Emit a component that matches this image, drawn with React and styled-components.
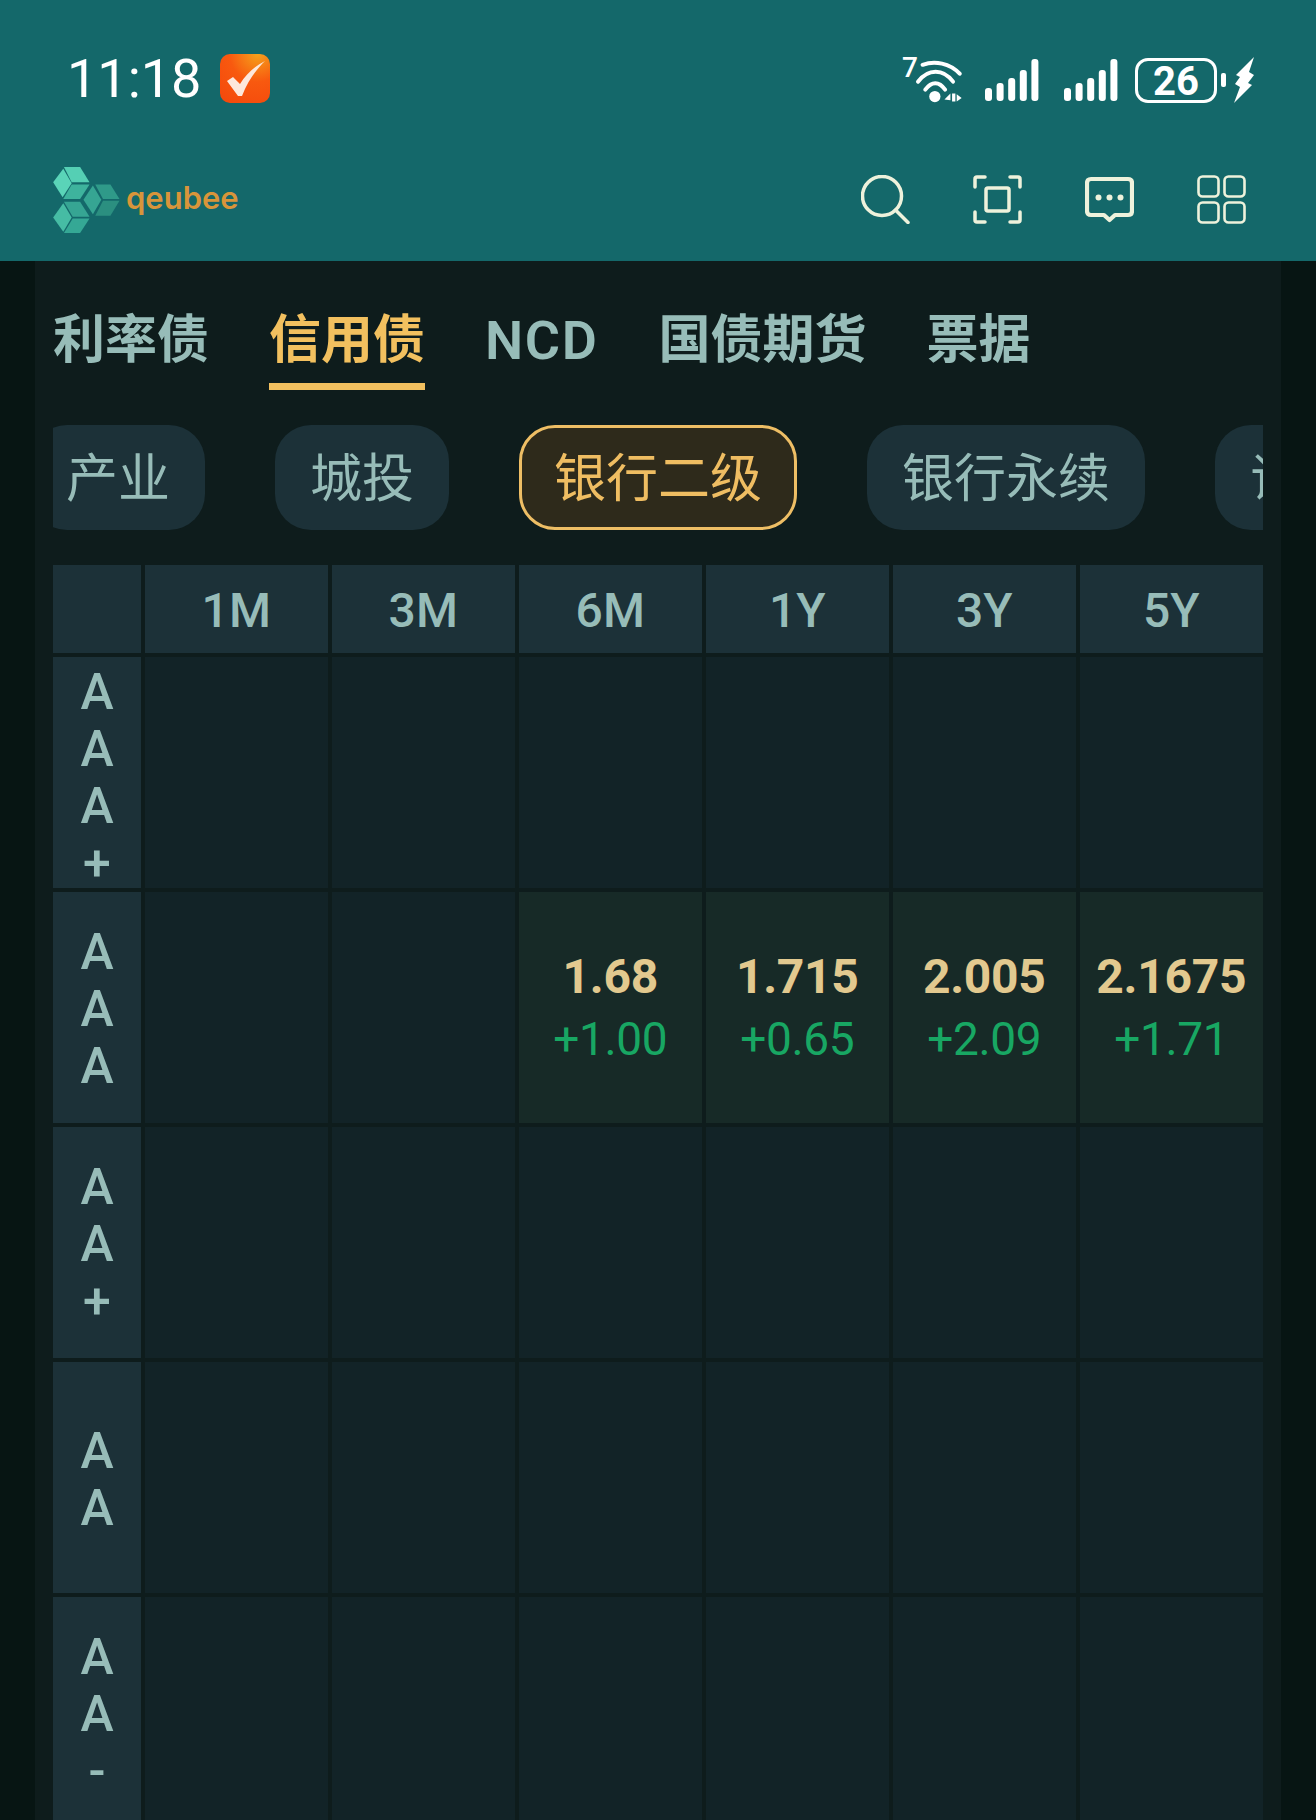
import React from "react";
import styled, { createGlobalStyle } from "styled-components";

const GlobalStyle = createGlobalStyle`
  html, body {
    margin: 0;
    padding: 0;
    background: #071513;
  }
  * {
    box-sizing: border-box;
  }
`;

const Page = styled.div`
  width: 1316px;
  height: 1820px;
  overflow: hidden;
  background: #071513;
  font-family: Roboto, "Noto Sans CJK SC", sans-serif;
`;

const Header = styled.header`
  height: 261px;
  background: #14686a;
  display: flex;
  flex-direction: column;
`;

const StatusBar = styled.div`
  height: 131px;
  padding: 54px 62px 0 67px;
  display: flex;
  justify-content: space-between;
  align-items: flex-start;
`;

const StatusLeft = styled.div`
  display: flex;
  align-items: center;
  gap: 19px;
`;

const Time = styled.span`
  color: #fff;
  font-size: 54px;
  line-height: 48px;
`;

const CheckBadge = styled.div`
  width: 50px;
  height: 49px;
  border-radius: 10px;
  background: radial-gradient(circle at 75% 0%, #f5a21c 0%, #f8590f 45%, #f4470c 100%);
  display: flex;
  align-items: center;
  justify-content: center;
`;

const StatusRight = styled.div`
  display: flex;
  align-items: center;
  height: 48px;
  margin-top: 2px;
`;

const WifiWrap = styled.div`
  display: flex;
  align-items: flex-start;
  margin-right: 23px;
`;

const WifiSup = styled.span`
  color: #fff;
  font-size: 28px;
  font-weight: 500;
  line-height: 20px;
  width: 13px;
`;

const SignalIcon = styled.svg`
  display: block;
  width: 54px;
  height: 42px;
  margin-right: ${(p) => p.$gap}px;
`;

const Battery = styled.div`
  width: 82px;
  height: 45px;
  border: 3px solid #fff;
  border-radius: 13px;
  color: #fff;
  font-size: 40px;
  font-weight: 700;
  line-height: 41px;
  text-align: center;
`;

const BatteryNub = styled.div`
  width: 5px;
  height: 14px;
  margin: 0 8px 0 4px;
  border-radius: 2px;
  background: #fff;
`;

const NavBar = styled.div`
  flex: 1;
  padding: 0 70px 0 53px;
  display: flex;
  justify-content: space-between;
  align-items: flex-start;
`;

const Logo = styled.div`
  display: flex;
  align-items: center;
  gap: 6px;
  margin-top: 36px;
`;

const LogoText = styled.span`
  padding-bottom: 5px;
  color: #d8953a;
  font-family: Inter, sans-serif;
  font-size: 31px;
  font-weight: 600;
  line-height: 40px;
`;

const NavIcons = styled.div`
  display: flex;
  gap: 63px;
  margin-top: 44px;
`;

const NavIcon = styled.svg`
  display: block;
  width: 49px;
  height: 49px;
  fill: none;
  stroke: #eef2dc;
  stroke-width: ${(p) => p.$stroke || 3.5};
  stroke-linecap: round;
  stroke-linejoin: round;
`;

const Main = styled.main`
  width: 1246px;
  margin: 0 35px;
  height: 1559px;
  padding: 50px 18px 0;
  background: #0e1c1c;
`;

const Tabs = styled.nav`
  display: flex;
  gap: 60px;
`;

const Tab = styled.div`
  height: 79px;
  padding-bottom: 12px;
  border-bottom: 7px solid ${(p) => (p.$active ? "#f2c05f" : "transparent")};
  color: ${(p) => (p.$active ? "#f2c05f" : "#97bcb8")};
  font-size: ${(p) => (p.$latin ? 54 : 52)}px;
  font-weight: ${(p) => (p.$latin ? 600 : 700)};
  letter-spacing: ${(p) => (p.$latin ? "1.6px" : "0")};
  line-height: 60px;
`;

const ChipClip = styled.div`
  margin-top: 35px;
  overflow: hidden;
`;

const ChipTrack = styled.div`
  display: flex;
  gap: 70px;
  margin-left: -22px;
  width: 1400px;
`;

const Chip = styled.div`
  flex: none;
  height: 105px;
  border-radius: 36px;
  border: ${(p) => (p.$active ? "3px solid #eebe65" : "none")};
  padding: ${(p) => (p.$active ? "0 32px" : "0 35px")};
  background: ${(p) => (p.$active ? "#2e2a1b" : "#1c3138")};
  color: ${(p) => (p.$active ? "#efbd62" : "#97bcb8")};
  font-size: 52px;
  line-height: ${(p) => (p.$active ? "103px" : "109px")};
`;

const Grid = styled.div`
  margin-top: 35px;
  display: grid;
  grid-template-columns: 88px repeat(6, 1fr);
  grid-template-rows: 88px;
  grid-auto-rows: 231px;
  column-gap: 3.5px;
  row-gap: 4px;
`;

const HeadCell = styled.div`
  background: #1c3138;
  color: #97bcb8;
  font-size: 48px;
  font-weight: 500;
  line-height: 92px;
  text-align: center;
`;

const RatingCell = styled.div`
  padding-top: ${(p) => (p.$tall ? 10 : 4)}px;
  background: #1c3138;
  display: flex;
  align-items: center;
  justify-content: center;
`;

const RatingText = styled.div`
  width: 40px;
  color: #97bcb8;
  font-size: 50px;
  font-weight: 500;
  line-height: 57px;
  text-align: center;
  word-break: break-all;
`;

const Cell = styled.div`
  background: ${(p) => (p.$filled ? "#172a27" : "#122327")};
  display: flex;
  flex-direction: column;
  align-items: center;
  justify-content: center;
`;

const Value = styled.div`
  color: #e2c98f;
  font-size: 48px;
  font-weight: 700;
  letter-spacing: -0.3px;
  line-height: 63px;
`;

const Delta = styled.div`
  color: #18a763;
  font-size: 46px;
  font-weight: 400;
  letter-spacing: -0.4px;
  line-height: 63px;
`;

const mainTabs = ["利率债", "信用债", "NCD", "国债期货", "票据"];
const chips = ["产业", "城投", "银行二级", "银行永续", "证券公司"];
const tenors = ["1M", "3M", "6M", "1Y", "3Y", "5Y"];

const rows = [
  { rating: "AAA+", cells: {} },
  {
    rating: "AAA",
    cells: {
      "6M": ["1.68", "+1.00"],
      "1Y": ["1.715", "+0.65"],
      "3Y": ["2.005", "+2.09"],
      "5Y": ["2.1675", "+1.71"],
    },
  },
  { rating: "AA+", cells: {} },
  { rating: "AA", cells: {} },
  { rating: "AA-", cells: {} },
];

function Signal({ gap }) {
  const heights = [13, 18, 23, 31, 42];
  return (
    <SignalIcon $gap={gap} viewBox="0 0 54 42">
      {heights.map((h, i) => (
        <rect key={h} x={i * 11.6} y={42 - h} width="7" height={h} rx="3" fill="#fff" />
      ))}
    </SignalIcon>
  );
}

function Wifi() {
  return (
    <svg width="47" height="44" viewBox="285 80 142 132" style={{ display: "block", marginTop: 1 }}>
      <g fill="none" stroke="#fff" strokeWidth="12" strokeLinecap="round">
        <path d="M308 97 C345 84 390 92 420 124" />
        <path d="M294 148 C325 108 370 108 400 148" />
        <path d="M316 172 C335 146 358 146 376 172" />
      </g>
      <circle cx="345" cy="193" r="17" fill="#fff" />
      <path d="M374 202 L392 184 V204 Z M397 184 H407 V208 H397 Z M411 186 L426 197 L411 208 Z" fill="#fff" />
    </svg>
  );
}

function Cubes() {
  const faces = [
    ["160,545 190,505 215,548 188,590", "#5ad4b8"],
    ["192,500 240,500 268,545 215,545", "#55cfb4"],
    ["215,552 268,552 240,595 190,595", "#3eb39d"],
    ["250,597 278,555 303,597 278,640", "#36a593"],
    ["285,552 330,552 357,595 308,595", "#2f9a89"],
    ["308,600 357,600 330,645 285,645", "#2b8f80"],
    ["160,650 190,608 215,650 190,692", "#46bca4"],
    ["192,603 240,603 268,648 218,648", "#36a593"],
    ["218,653 268,653 240,696 192,696", "#35a895"],
  ];
  return (
    <svg width="67" height="66" viewBox="160 500 198 196">
      {faces.map(([points, fill]) => (
        <polygon key={points} points={points} fill={fill} />
      ))}
    </svg>
  );
}

export default function App() {
  return (
    <Page>
      <GlobalStyle />
      <Header>
        <StatusBar>
          <StatusLeft>
            <Time>11:18</Time>
            <CheckBadge>
              <svg width="42" height="38" viewBox="0 0 42 38">
                <path
                  d="M3 21 L9 17 L16 24 C22 14 31 6 41 1 C31 11 24 21 18 36 L14 36 Z"
                  fill="#fde8dc"
                />
              </svg>
            </CheckBadge>
          </StatusLeft>
          <StatusRight>
            <WifiWrap>
              <WifiSup>7</WifiSup>
              <Wifi />
            </WifiWrap>
            <Signal gap={25} />
            <Signal gap={17} />
            <Battery>26</Battery>
            <BatteryNub />
            <svg width="20" height="46" viewBox="0 0 20 46">
              <path d="M20 0 L15 15 L20 18 L14 26 L18 28 L0 46 L6 30 L1 27 L6 20 L2 18 Z" fill="#fff" />
            </svg>
          </StatusRight>
        </StatusBar>
        <NavBar>
          <Logo>
            <Cubes />
            <LogoText>qeubee</LogoText>
          </Logo>
          <NavIcons>
            <NavIcon viewBox="0 0 49 49">
              <circle cx="21" cy="21" r="19.5" />
              <path d="M34.5 35 L47 47.5" />
            </NavIcon>
            <NavIcon viewBox="0 0 49 49">
              <path d="M2 12 V4 Q2 2 4 2 H12 M37 2 H45 Q47 2 47 4 V12 M47 37 V45 Q47 47 45 47 H37 M12 47 H4 Q2 47 2 45 V37" />
              <rect x="13" y="13" width="23" height="23" rx="2" />
            </NavIcon>
            <NavIcon viewBox="0 0 49 49" $stroke={4.2}>
              <path d="M6 4 H43 Q47 4 47 8 V36 Q47 40 43 40 H30 L24.5 45 L19 40 H6 Q2 40 2 36 V8 Q2 4 6 4 Z" />
              <circle cx="13.5" cy="22.5" r="3" fill="#eef2dc" stroke="none" />
              <circle cx="24.5" cy="22.5" r="3" fill="#eef2dc" stroke="none" />
              <circle cx="35.5" cy="22.5" r="3" fill="#eef2dc" stroke="none" />
            </NavIcon>
            <NavIcon viewBox="0 0 49 49" $stroke={2.6}>
              <rect x="1.5" y="1.5" width="20" height="20" rx="4" />
              <rect x="27.5" y="1.5" width="20" height="20" rx="4" />
              <rect x="1.5" y="27.5" width="20" height="20" rx="4" />
              <rect x="27.5" y="27.5" width="20" height="20" rx="4" />
            </NavIcon>
          </NavIcons>
        </NavBar>
      </Header>
      <Main>
        <Tabs>
          {mainTabs.map((t) => (
            <Tab key={t} $active={t === "信用债"} $latin={t === "NCD"}>
              {t}
            </Tab>
          ))}
        </Tabs>
        <ChipClip>
          <ChipTrack>
            {chips.map((c) => (
              <Chip key={c} $active={c === "银行二级"}>
                {c}
              </Chip>
            ))}
          </ChipTrack>
        </ChipClip>
        <Grid>
          <HeadCell />
          {tenors.map((t) => (
            <HeadCell key={t}>{t}</HeadCell>
          ))}
          {rows.map((row) => (
            <React.Fragment key={row.rating}>
              <RatingCell $tall={row.rating.length > 3}>
                <RatingText>{row.rating}</RatingText>
              </RatingCell>
              {tenors.map((t) => {
                const data = row.cells[t];
                return (
                  <Cell key={t} $filled={!!data}>
                    {data && <Value>{data[0]}</Value>}
                    {data && <Delta>{data[1]}</Delta>}
                  </Cell>
                );
              })}
            </React.Fragment>
          ))}
        </Grid>
      </Main>
    </Page>
  );
}
